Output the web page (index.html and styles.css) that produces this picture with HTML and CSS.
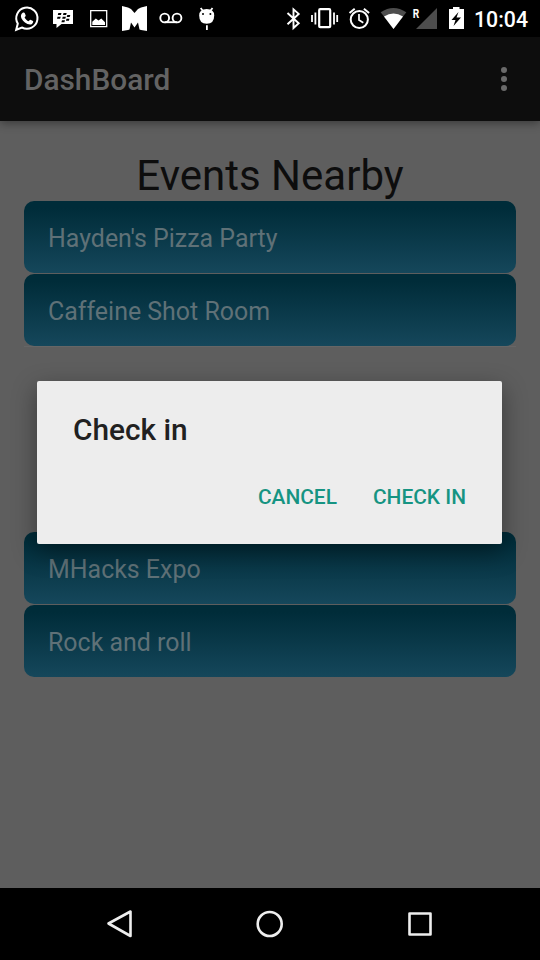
FILE: index.html
```html
<!DOCTYPE html>
<html lang="en">
<head>
<meta charset="utf-8">
<title>DashBoard</title>
<link rel="stylesheet" href="styles.css">
</head>
<body>
<div class="screen">
  <header class="status">
    <div class="status-group notifications">
      <svg width="36" height="37" viewBox="9 0 36 37"><path d="M16.200 29.800 17.800 23.600A10.600 10.600 0 1 1 21.900 27.500Z" fill="none" stroke="#fff" stroke-width="2"/><path d="M22.700 12.800c.8-.6 1.700-.4 2 .3l1 2.400c.2.5-.8 1.600-1.100 2 1 1.900 2.300 3 4 3.800.6-.5 1.400-1.700 1.900-1.500l2.500 1.300c.8.5-.3 2.700-1.300 3.100-3.600 1.500-8.700-2.600-10.300-5.900-1-2.200-.3-4.500 1.300-5.500Z" fill="#fff"/></svg>
      <svg width="36" height="37" viewBox="45 0 36 37"><path d="M53 10h20v14H61.500L56.500 28v-4H53Z" fill="#fff"/><path d="M58.300 13h3.200l-.6 2h-3.100ZM63.500 13h3.200l-.6 2H63ZM57.500 16.700h3.200l-.6 2H57ZM62.700 16.700h3.200l-.6 2h-3.100ZM67.300 15h3l-.6 2h-3ZM62 20.200h3l-.6 2h-3ZM66.500 18.800h3l-.6 2h-3Z" fill="#000"/></svg>
      <svg width="35" height="37" viewBox="81 0 35 37"><path d="M90.700 10.700h16v16h-16Z" fill="none" stroke="#fff" stroke-width="1.300"/><path d="M92.300 25v-3.300l3.500-3.200 2.700 2 2.800-2 3.700 3.700V25Z" fill="#fff"/></svg>
      <svg width="37" height="37" viewBox="116 0 37 37"><path d="M122 6 128 7.500 131 9 134.500 13 138 9 141 7.500 147 6V31L141 30 139.500 29.500 138 22.500 134.500 27.500 131 22.500 129.500 29.500 128 30 122 31Z" fill="#fff"/></svg>
      <svg width="36" height="37" viewBox="153 0 36 37"><g fill="none" stroke="#fff" stroke-width="1.900"><circle cx="164.700" cy="18" r="4.400"/><circle cx="177" cy="18" r="4.400"/><path d="M164.700 22.200H177"/></g></svg>
      <svg width="36" height="37" viewBox="189 0 36 37"><path d="M199.200 15.500Q199.200 9 206.700 9T214.200 15.500Q214.200 23.800 206.700 23.800T199.200 15.500Z" fill="#fff"/><path d="m200.700 8 2.500 3.200M212.500 8l-2.400 3.200M206.900 25.300v4.700" stroke="#fff" stroke-width="1.800"/><circle cx="203" cy="14" r="1" fill="#000"/><circle cx="210.400" cy="14" r="1" fill="#000"/></svg>
    </div>
    <div class="status-group system">
      <svg width="32" height="37" viewBox="276 0 32 37"><path d="m287.500 13 11.200 10.300-5.200 4.700V9.300l5.200 4.600-11.200 10.400" fill="none" stroke="#fff" stroke-width="1.900"/></svg>
      <svg width="34" height="37" viewBox="308 0 34 37"><rect x="319.200" y="9.200" width="11" height="18" rx="1" fill="none" stroke="#fff" stroke-width="2.200"/><path d="M312 15v7M315.400 12.500v12M334 12.500v12M337.200 15v7" stroke="#fff" stroke-width="1.800"/></svg>
      <svg width="34" height="37" viewBox="342 0 34 37"><g fill="none" stroke="#fff" stroke-width="2"><circle cx="359.300" cy="19.500" r="8.600"/><path d="m349.500 13 5.200-4.300M363.900 8.700l5.200 4.300"/><path d="M359 14v6l4.300 2.700" stroke-width="1.700"/></g></svg>
      <svg width="34" height="37" viewBox="376 0 34 37"><path d="M393.500 29 380.700 12.300Q393.500 3.500 406.300 12.300Z" fill="#4d4d4d"/><path d="M393.500 29 384 16.600Q393.500 10.600 403 16.600Z" fill="#fff"/></svg>
      <svg width="32" height="37" viewBox="410 0 32 37"><path d="M437 8v21h-21Z" fill="#4d4d4d"/><text class="roaming" x="412.800" y="17.500" textLength="6.500" lengthAdjust="spacingAndGlyphs">R</text></svg>
      <svg width="28" height="37" viewBox="442 0 28 37"><path d="M449 9h4V7h6.500v2h4.500v20h-15Z" fill="#fff"/><path d="m458.500 12-7 8h4l-2 6 7.500-8.500h-4.500Z" fill="#000"/></svg>
      <span class="clock">10:04</span>
    </div>
  </header>
  <div class="appbar">
    <h1 class="app-title">DashBoard</h1>
    <div class="overflow"><i class="dot"></i><i class="dot"></i><i class="dot"></i></div>
  </div>
  <main class="content">
    <h2 class="heading">Events Nearby</h2>
    <ul class="events nearby">
      <li class="event">Hayden's Pizza Party</li>
      <li class="event">Caffeine Shot Room</li>
    </ul>
    <ul class="events">
      <li class="event">MHacks Expo</li>
      <li class="event">Rock and roll</li>
    </ul>
  </main>
  <nav class="navbar">
    <svg width="150" height="72" viewBox="45 888 150 72"><path d="M108.500 923.500 130.500 911.500V936Z"/></svg>
    <svg width="150" height="72" viewBox="195 888 150 72"><circle cx="269.700" cy="924" r="12"/></svg>
    <svg width="150" height="72" viewBox="345 888 150 72"><path d="M409.500 913.500h21v21h-21Z"/></svg>
  </nav>
  <div class="dialog">
    <h3 class="dialog-title">Check in</h3>
    <div class="actions"><span class="action">CANCEL</span><span class="action">CHECK IN</span></div>
  </div>
</div>
</body>
</html>
```
FILE: styles.css
```css
* { box-sizing: border-box; margin: 0; padding: 0; }
body { font-family: Roboto, "Liberation Sans", sans-serif; background: #000; }
svg { display: block; flex: none; }
.screen { position: relative; display: flex; flex-direction: column; width: 540px; height: 960px; overflow: hidden; background: #5e5e5e; }
.status { display: flex; justify-content: space-between; height: 37px; padding: 0 12px 0 9px; background: #000; }
.status-group { display: flex; align-items: center; }
.clock { width: 58px; padding-top: 3px; text-align: right; font-size: 21.300px; line-height: 34px; font-weight: 500; color: #fff; white-space: nowrap; }
.roaming { font-size: 12px; font-weight: 700; fill: #fff; }
.appbar { display: flex; align-items: center; justify-content: space-between; height: 84px; padding: 0 33px 0 24px; background: #0d0d0d; box-shadow: 0 2px 9px rgba(0, 0, 0, .4); }
.app-title { padding-top: 2px; font-size: 29.800px; line-height: 36px; font-weight: 500; color: #636363; }
.overflow { display: flex; flex-direction: column; gap: 3px; }
.dot { width: 6px; height: 6px; border-radius: 50%; background: #6a6a6a; }
.content { flex: 1; padding: 29px 24px 0; }
.heading { height: 51px; font-size: 42px; line-height: 51px; font-weight: 400; text-align: center; color: #0d0d0d; }
.events { display: flex; flex-direction: column; gap: 1px; list-style: none; }
.nearby { margin-bottom: 185px; border-bottom: 1px solid #666; }
.event { height: 72px; padding: 2px 24px 0; border-radius: 10px; font-size: 24.950px; line-height: 72px; color: #5f7177; background: linear-gradient(#002c39 10%, #15475b); }
.navbar { display: flex; justify-content: center; height: 72px; background: #000; }
.navbar svg { fill: none; stroke: #eee; stroke-width: 2.600; stroke-linejoin: round; }
.dialog { position: absolute; left: 37px; top: 381px; width: 465px; height: 163px; padding: 31px 36px 0; border-radius: 2px; background: #ededed; box-shadow: 0 8px 24px rgba(0, 0, 0, .4); }
.dialog-title { font-size: 29.800px; line-height: 36px; font-weight: 500; color: #212121; }
.actions { display: flex; justify-content: flex-end; gap: 36px; margin-top: 36px; }
.action { font-size: 20.900px; line-height: 26px; font-weight: 500; color: #169482; }
```
